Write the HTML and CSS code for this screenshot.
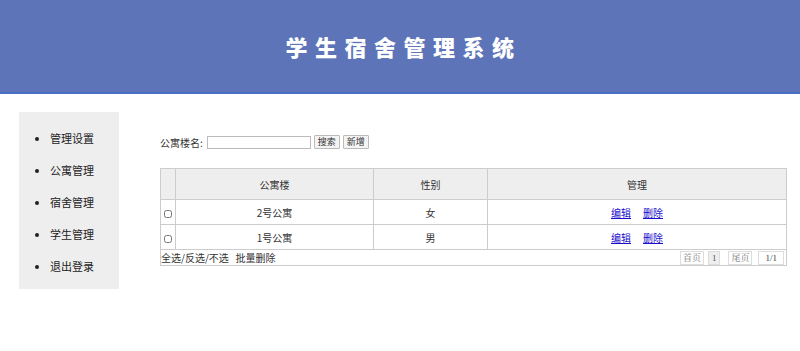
FILE: index.html
```html
<!DOCTYPE html>
<html lang="zh-CN">
<head>
    <meta charset="UTF-8">
    <meta name="viewport" content="width=device-width, initial-scale=1.0">
    <title>学生宿舍管理系统</title>
    <link rel="stylesheet" href="styles.css">
</head>
<body>
    <div class="header">
        <h1>学生宿舍管理系统</h1>
    </div>
    <div class="layout">
        <div class="sidebar">
            <ul>
                <li>管理设置</li>
                <li>公寓管理</li>
                <li>宿舍管理</li>
                <li>学生管理</li>
                <li>退出登录</li>
            </ul>
        </div>
        <div class="content">
            <form class="search">
                <label for="name">公寓楼名:</label>
                <input type="text" id="name">
                <button type="button">搜索</button>
                <button type="button">新增</button>
            </form>
            <table class="list">
                <tr>
                    <th class="col-check"></th>
                    <th class="col-name">公寓楼</th>
                    <th class="col-sex">性别</th>
                    <th>管理</th>
                </tr>
                <tr>
                    <td><input type="checkbox"></td>
                    <td>2号公寓</td>
                    <td>女</td>
                    <td><a href="#">编辑</a><a href="#">删除</a></td>
                </tr>
                <tr>
                    <td><input type="checkbox"></td>
                    <td>1号公寓</td>
                    <td>男</td>
                    <td><a href="#">编辑</a><a href="#">删除</a></td>
                </tr>
                <tr class="foot">
                    <td colspan="4">
                        <div class="foot-row">
                            <span>全选/反选/不选&nbsp;&nbsp;&nbsp;批量删除</span>
                            <span class="pager">
                                <span class="page">首页</span>
                                <span class="page current">1</span>
                                <span class="page">尾页</span>
                                <span class="page total">1/1</span>
                            </span>
                        </div>
                    </td>
                </tr>
            </table>
        </div>
    </div>
</body>
</html>
```

FILE: styles.css
```css
body {
    margin: 0;
    font-family: "Noto Sans CJK SC", "Liberation Sans", sans-serif;
    font-size: 10px;
    color: #333;
    background: #fff;
}
.header {
    height: 92px;
    background-color: #5d75b8;
    border-bottom: 2px solid #4a6ec4;
    display: flex;
    align-items: center;
    justify-content: center;
}
.header h1 {
    margin: 0;
    color: #fff;
    font-size: 22px;
    font-weight: 900;
    letter-spacing: 7.5px;
    padding-left: 7px;
    line-height: 1;
}
.layout {
    display: flex;
    align-items: flex-start;
}
.sidebar {
    width: 100px;
    margin: 18px 0 0 19px;
    background: #eee;
    padding: 10px 0 7px;
}
.sidebar ul {
    margin: 0;
    padding-left: 31px;
    list-style: disc;
}
.sidebar li {
    line-height: 32px;
    font-size: 11px;
    color: #222;
}
.content {
    margin-left: 41px;
    padding-top: 41px;
    flex: 1;
    padding-right: 13px;
}
.search {
    display: flex;
    align-items: center;
    gap: 3px;
    height: 14px;
}
.search input {
    width: 98px;
    height: 11px;
    padding: 0 2px;
    border: 1px solid #bbb;
    margin: 0 0 0 1px;
}
.search button {
    font-family: inherit;
    font-size: 9px;
    height: 14px;
    padding: 0 3px;
    line-height: 12px;
    border: 1px solid #bbb;
    background: #f4f4f4;
    color: #333;
    border-radius: 1px;
}
.list {
    margin-top: 19px;
    width: 627px;
    border-collapse: collapse;
    border: 1px solid #ccc;
}
.list th,
.list td {
    border: 1px solid #ccc;
    text-align: center;
    padding: 0;
    font-weight: normal;
}
.list th {
    background: #eee;
    height: 30px;
}
.list td {
    height: 24px;
}
.col-check {
    width: 14px;
}
.col-name {
    width: 197px;
}
.col-sex {
    width: 113px;
}
.list input[type="checkbox"] {
    width: 8px;
    height: 8px;
    margin: 0;
    vertical-align: middle;
}
.list a {
    color: #1a0dcc;
    margin: 0 6px;
}
.list .foot td {
    height: 15px;
    text-align: left;
}
.foot-row {
    display: flex;
    justify-content: space-between;
    align-items: center;
}
.pager {
    display: flex;
    gap: 4px;
    padding-right: 2px;
}
.page {
    font-family: "Liberation Serif", "Noto Serif CJK SC", serif;
    font-size: 9px;
    color: #777;
    border: 1px solid #ddd;
    padding: 0 2px;
    line-height: 12px;
}
.page.current {
    background: #eee;
    color: #555;
    margin-right: 4px;
    padding: 0 3px;
}
.page.total {
    margin-left: 2px;
    padding: 0 6px;
    color: #444;
}
```
